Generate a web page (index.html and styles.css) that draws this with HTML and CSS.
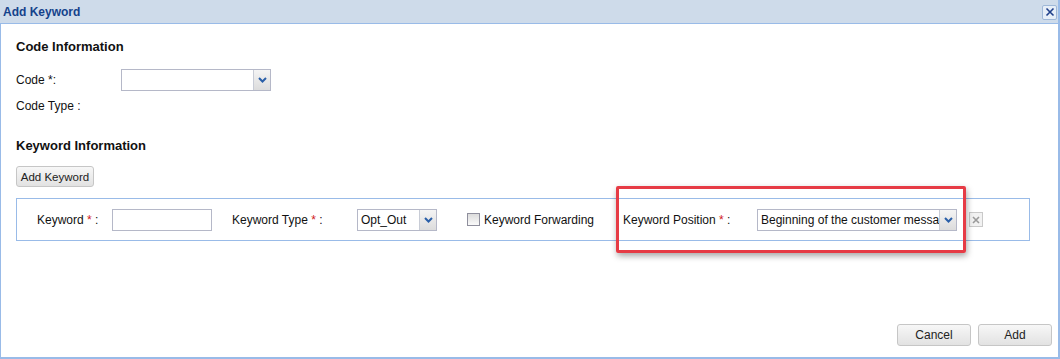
FILE: index.html
```html
<!DOCTYPE html>
<html>
<head>
<meta charset="utf-8">
<link rel="stylesheet" href="styles.css">
</head>
<body>
<div class="window">
  <div class="header">
    <span class="title">Add Keyword</span>
    <span class="close"><svg width="10" height="10" viewBox="0 0 10 10"><path d="M1.5 1.5 L8.5 8.5 M8.5 1.5 L1.5 8.5" stroke="#1f3f8a" stroke-width="1.6" fill="none"/></svg></span>
  </div>
  <div class="body">
    <div class="section-title first">Code Information</div>
    <div class="row code-row">
      <span class="label code-label">Code *:</span>
      <div class="select code-select"><span class="value"></span><span class="trigger"><svg width="9" height="6" viewBox="0 0 9 6"><path d="M1 1 L4.5 4.5 L8 1" stroke="#2a5fa8" stroke-width="2" fill="none"/></svg></span></div>
    </div>
    <div class="row type-row"><span class="label">Code Type :</span></div>
    <div class="section-title second">Keyword Information</div>
    <div class="btn add-kw">Add Keyword</div>
    <div class="panel">
      <span class="label kw-label">Keyword <span class="req">*</span> :</span>
      <div class="input kw-input"></div>
      <span class="label type-label">Keyword Type <span class="req">*</span> :</span>
      <div class="select type-select"><span class="value">Opt_Out</span><span class="trigger"><svg width="9" height="6" viewBox="0 0 9 6"><path d="M1 1 L4.5 4.5 L8 1" stroke="#2a5fa8" stroke-width="2" fill="none"/></svg></span></div>
      <label class="check"><span class="box"></span><span class="label">Keyword Forwarding</span></label>
      <span class="label pos-label">Keyword Position <span class="req">*</span> :</span>
      <div class="select pos-select"><span class="value">Beginning of the customer messa</span><span class="trigger"><svg width="9" height="6" viewBox="0 0 9 6"><path d="M1 1 L4.5 4.5 L8 1" stroke="#2a5fa8" stroke-width="2" fill="none"/></svg></span></div>
      <span class="remove"><svg width="8" height="8" viewBox="0 0 8 8"><path d="M1 1 L7 7 M7 1 L1 7" stroke="#9a9a9a" stroke-width="1.6" fill="none"/></svg></span>
    </div>
    <div class="footer">
      <div class="btn foot-btn">Cancel</div>
      <div class="btn foot-btn">Add</div>
    </div>
  </div>
  <div class="highlight"></div>
</div>
</body>
</html>
```
FILE: styles.css
```css
* { box-sizing: border-box; }
html, body { margin: 0; padding: 0; background: #fff; }
body {
  font-family: "Liberation Sans", Arial, sans-serif;
  font-size: 12px;
  color: #111;
}
.window {
  position: relative;
  width: 1060px;
  height: 359px;
  display: flex;
  flex-direction: column;
  border-left: 1px solid #99bbe8;
  border-right: 2px solid #99bbe8;
  border-bottom: 2px solid #99bbe8;
}
.header {
  height: 24px;
  background: #cedbea;
  border-bottom: 1px solid #99bbe8;
  display: flex;
  align-items: center;
  justify-content: space-between;
  padding: 0 1px 0 3px;
  margin-left: -1px;
}
.title {
  font-weight: bold;
  font-size: 12px;
  color: #15428b;
}
.close {
  width: 15px;
  height: 15px;
  border: 1px solid #9fb8d8;
  background: #e6eef8;
  border-radius: 2px;
  display: flex;
  align-items: center;
  justify-content: center;
  margin-top: 1px;
}
.body {
  flex: 1;
  display: flex;
  flex-direction: column;
  padding: 0 6px 0 15px;
}
.section-title {
  font-weight: bold;
  font-size: 13px;
  line-height: 16px;
  color: #111;
}
.section-title.first { margin-top: 15px; }
.section-title.second { margin-top: 24px; }
.row { display: flex; align-items: center; }
.code-row { margin-top: 14px; height: 22px; }
.type-row { margin-top: 7px; height: 16px; }
.label { white-space: nowrap; color: #111; }
.code-label { width: 105px; }
.req { color: #d01a1a; }
.select {
  display: flex;
  height: 22px;
  border: 1px solid #b5b8c8;
  background: #fff;
}
.select .value {
  flex: 1;
  padding: 0 3px;
  line-height: 20px;
  overflow: hidden;
  white-space: nowrap;
  font-size: 12px;
  color: #111;
}
.select .trigger {
  width: 17px;
  border-left: 1px solid #c8ccd6;
  background: linear-gradient(#f4f4f4, #dcdcdc);
  display: flex;
  align-items: center;
  justify-content: center;
}
.code-select { width: 150px; }
.btn {
  display: flex;
  align-items: center;
  justify-content: center;
  border: 1px solid #c6c6c6;
  border-radius: 3px;
  background: linear-gradient(#f7f7f7, #e2e2e2);
  color: #222;
  font-size: 11.5px;
}
.add-kw {
  margin-top: 12px;
  width: 78px;
  height: 21px;
}
.panel {
  margin-top: 11px;
  width: 1014px;
  height: 43px;
  border: 1px solid #99bbe8;
  display: flex;
  align-items: center;
  padding-left: 20px;
}
.kw-label { width: 75px; }
.input {
  height: 22px;
  border: 1px solid #b5b8c8;
  background: #fff;
}
.kw-input { width: 100px; }
.type-label { width: 125px; margin-left: 20px; }
.type-select { width: 80px; }
.check {
  display: flex;
  align-items: center;
  width: 156px;
  margin-left: 30px;
}
.check .box {
  width: 13px;
  height: 13px;
  border: 1px solid #8f8f9d;
  background: linear-gradient(#dcdcdc, #fafafa);
  margin-right: 4px;
}
.pos-label { width: 134px; }
.pos-select { width: 200px; }
.remove {
  width: 14px;
  height: 15px;
  margin-left: 12px;
  border: 1px solid #c9c9c9;
  background: #f2f2f2;
  display: flex;
  align-items: center;
  justify-content: center;
}
.footer {
  margin-top: auto;
  margin-bottom: 11px;
  display: flex;
  justify-content: flex-end;
  gap: 7px;
}
.foot-btn {
  width: 74px;
  height: 22px;
  font-size: 12px;
}
.highlight {
  position: absolute;
  left: 615px;
  top: 186px;
  width: 350px;
  height: 67px;
  border: 3px solid #e63b45;
  border-radius: 2px;
  box-shadow: 1px 3px 6px rgba(0,0,0,0.35);
  pointer-events: none;
}
```
